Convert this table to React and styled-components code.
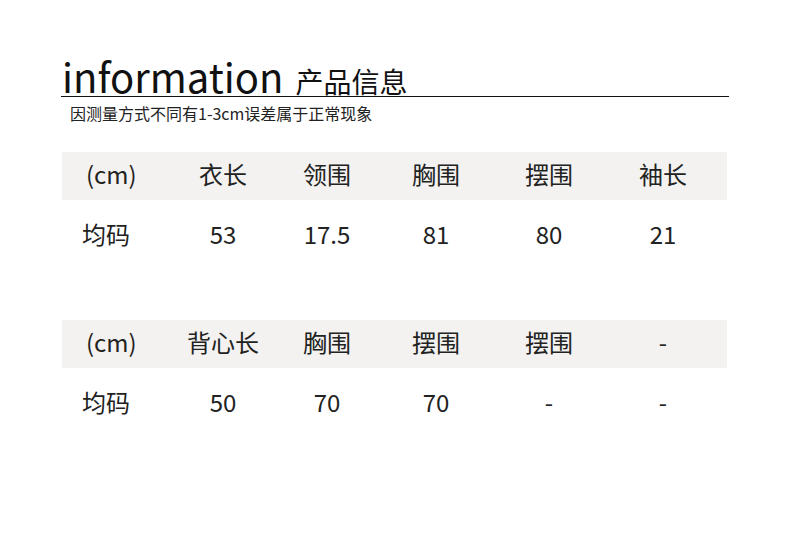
import React from "react";
import styled, { createGlobalStyle } from "styled-components";

const Global = createGlobalStyle`
  html, body { margin: 0; padding: 0; background: #ffffff; }
  body { font-family: "Noto Sans CJK SC", "Noto Sans", sans-serif; color: #1c1c1c; }
`;

const Page = styled.div`
  width: 790px;
  height: 535px;
  box-sizing: border-box;
  padding: 56px 61px 0 61px;
`;

const TitleRow = styled.div`
  display: flex;
  align-items: baseline;
  gap: 12px;
  height: 40px;
  border-bottom: 1px solid #111;
  padding-left: 1px;
`;

const TitleEn = styled.span`
  font-size: 40px;
  line-height: 1;
  font-weight: 400;
  color: #111;
`;

const TitleCn = styled.span`
  font-size: 28px;
  line-height: 1;
  color: #111;
`;

const Note = styled.div`
  margin-top: 8px;
  padding-left: 9px;
  font-size: 16px;
  line-height: 16px;
  color: #222;
`;

const Table = styled.div`
  margin-left: 1px;
  width: 665px;
  display: flex;
  flex-direction: column;
  gap: 12px;
  margin-top: ${(p) => p.$top}px;
`;

const Row = styled.div`
  display: grid;
  grid-template-columns: 108px 106px 102px 116px 110px 118px 1fr;
  align-items: center;
  height: 48px;
  background: ${(p) => (p.$head ? "#f3f2f0" : "transparent")};
`;

const Cell = styled.div`
  text-align: ${(p) => (p.$first ? "left" : "center")};
  padding-left: ${(p) => (p.$first ? (p.$head ? "24px" : "20px") : "0")};
  padding-bottom: 4px;
  font-size: 24px;
  line-height: 1;
  font-weight: 400;
  color: #222;
  white-space: nowrap;
`;

const tables = [
  {
    top: 31,
    head: ["(cm)", "衣长", "领围", "胸围", "摆围", "袖长"],
    body: ["均码", "53", "17.5", "81", "80", "21"],
  },
  {
    top: 60,
    head: ["(cm)", "背心长", "胸围", "摆围", "摆围", "-"],
    body: ["均码", "50", "70", "70", "-", "-"],
  },
];

export default function App() {
  return (
    <>
      <Global />
      <Page>
        <TitleRow>
          <TitleEn>information</TitleEn>
          <TitleCn>产品信息</TitleCn>
        </TitleRow>
        <Note>因测量方式不同有1-3cm误差属于正常现象</Note>
        {tables.map((t, ti) => (
          <Table key={ti} $top={t.top}>
            <Row $head>
              {t.head.map((c, i) => (
                <Cell key={i} $first={i === 0} $head>
                  {c}
                </Cell>
              ))}
            </Row>
            <Row>
              {t.body.map((c, i) => (
                <Cell key={i} $first={i === 0}>
                  {c}
                </Cell>
              ))}
            </Row>
          </Table>
        ))}
      </Page>
    </>
  );
}
